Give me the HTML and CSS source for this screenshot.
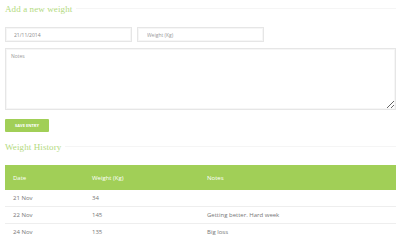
FILE: index.html
```html
<!DOCTYPE html>
<html lang="en">
<head>
    <meta charset="UTF-8">
    <title>Weight tracker</title>
<link rel="stylesheet" href="styles.css">
</head>
<body>
    <div class="page">
        <h2 class="section-title"><span>Add a new weight</span></h2>
        <form class="entry-form">
            <div class="form-row">
                <input type="text" class="field field-date" value="21/11/2014">
                <input type="text" class="field field-weight" placeholder="Weight (Kg)">
            </div>
            <textarea class="field field-notes" placeholder="Notes"></textarea>
            <button type="button" class="save-btn">Save entry</button>
        </form>

        <h2 class="section-title history-title"><span>Weight History</span></h2>
        <table class="history">
            <thead>
                <tr>
                    <th class="col-date">Date</th>
                    <th class="col-weight">Weight (Kg)</th>
                    <th>Notes</th>
                </tr>
            </thead>
            <tbody>
                <tr><td>21 Nov</td><td>34</td><td></td></tr>
                <tr><td>22 Nov</td><td>145</td><td>Getting better. Hard week</td></tr>
                <tr><td>24 Nov</td><td>135</td><td>Big loss</td></tr>
            </tbody>
        </table>
    </div>
</body>
</html>
```

FILE: styles.css
```css
body{
    margin: 0;
    background: #fff;
    font-family: "Open Sans", "Liberation Sans", sans-serif;
    color: #777;
}
.page{
    padding: 2px 4px 0 5px;
}
.section-title{
    display: flex;
    align-items: center;
    gap: 4px;
    margin: 0;
    height: 13px;
    font-family: "Liberation Serif", serif;
    font-weight: normal;
    font-size: 9px;
    letter-spacing: 0.1px;
    color: #b3da80;
}
.section-title::after{
    content: "";
    flex: 1;
    border-top: 1px solid #f5f5f5;
}
.entry-form{
    margin-top: 12px;
}
.form-row{
    display: flex;
    gap: 5px;
}
.field{
    box-sizing: border-box;
    border: 1px solid #e6e6e6;
    box-shadow: inset 0 0 0 1px #f6f6f6;
    background: #fff;
    font-family: "Open Sans", "Liberation Sans", sans-serif;
    font-size: 5px;
    color: #888;
    outline: none;
}
.field::placeholder{
    color: #999;
}
.field-date,
.field-weight{
    width: 127px;
    height: 15px;
    padding: 0 8px;
}
.field-weight{
    padding-left: 9px;
}
.field-notes{
    display: block;
    width: 391px;
    height: 62px;
    margin-top: 6px;
    padding: 4px 5px;
    resize: vertical;
}
.save-btn{
    display: block;
    margin-top: 9px;
    width: 44px;
    height: 13px;
    padding: 0;
    border: none;
    border-radius: 1px;
    background: #a1cf57;
    color: #fff;
    font-family: "Open Sans", "Liberation Sans", sans-serif;
    font-weight: bold;
    font-size: 4px;
    text-transform: uppercase;
    cursor: pointer;
}
.history-title{
    margin-top: 8px;
}
.history{
    margin-top: 12px;
    width: 391px;
    border-collapse: collapse;
    font-size: 6px;
}
.history th{
    height: 25px;
    padding: 0 8px;
    background: #a1cf57;
    color: #fff;
    text-align: left;
    font-weight: normal;
}
.history .col-date{
    width: 63px;
}
.history .col-weight{
    width: 99px;
}
.history td{
    height: 16px;
    padding: 0 8px;
    border-bottom: 1px solid #eee;
    color: #777;
}
```
